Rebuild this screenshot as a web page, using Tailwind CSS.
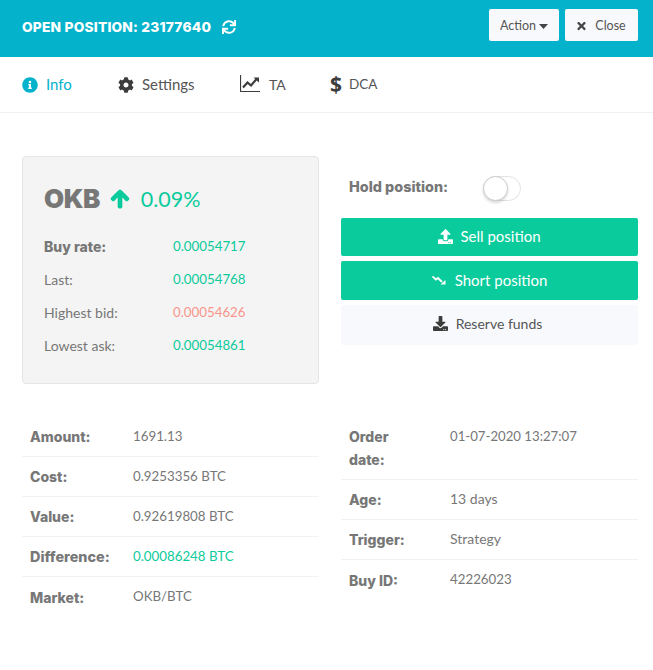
<!DOCTYPE html>
<html lang="en">
<head>
    <meta charset="UTF-8">
    <title>Open position</title>
    <script src="https://cdn.jsdelivr.net/npm/@tailwindcss/browser@4"></script>
</head>
<body class="bg-white font-['Lato',sans-serif] text-[14px] text-[#777777] w-[653px] h-[670px] overflow-hidden">
    <!-- Header -->
    <div class="h-[57px] bg-[#04b2cc] flex items-center justify-between pl-[22px] pr-[15px] pb-[3px]">
        <div class="flex items-center gap-[11px] text-white">
            <span class="font-['Inter',sans-serif] font-extrabold text-[13.75px] tracking-[0.2px] uppercase">Open position: 23177640</span>
            <svg class="w-[14px] h-[14px]" viewBox="0 0 512 512" fill="currentColor"><path d="M440.65 12.57l4 82.77A247.16 247.16 0 0 0 255.83 8C134.73 8 33.91 94.92 12.29 209.82A12 12 0 0 0 24.09 224h49.05a12 12 0 0 0 11.67-9.26 175.91 175.91 0 0 1 317-56.94l-101.46-4.86a12 12 0 0 0-12.57 12v47.41a12 12 0 0 0 12 12H500a12 12 0 0 0 12-12V12a12 12 0 0 0-12-12h-47.37a12 12 0 0 0-11.98 12.57zM255.83 432a175.61 175.61 0 0 1-146-77.8l101.8 4.87a12 12 0 0 0 12.57-12v-47.4a12 12 0 0 0-12-12H12a12 12 0 0 0-12 12V500a12 12 0 0 0 12 12h47.35a12 12 0 0 0 12-12.6l-4.15-82.57A247.17 247.17 0 0 0 255.83 504c121.11 0 221.93-86.92 243.55-201.82a12 12 0 0 0-11.8-14.18h-49.05a12 12 0 0 0-11.67 9.26A175.86 175.86 0 0 1 255.83 432z"/></svg>
        </div>
        <div class="flex gap-[6px] mb-[4px] text-[12.5px] text-[#555555]">
            <button class="w-[70px] h-[32px] pt-[2px] bg-[#f8f9fd] rounded-[2px] flex items-center justify-center gap-[3px]">
                Action
                <svg class="w-[9px] h-[5px]" viewBox="0 0 9 5" fill="#444444"><path d="M0 0h9L4.5 5z"/></svg>
            </button>
            <button class="w-[73px] h-[32px] pt-[2px] bg-[#f8f9fd] rounded-[2px] flex items-center justify-center gap-[9px]">
                <svg class="w-[9px] h-[12px]" viewBox="0 0 352 512" fill="#444444"><path d="M242.72 256l100.07-100.07c12.28-12.28 12.28-32.19 0-44.48l-22.24-22.24c-12.28-12.28-32.19-12.28-44.48 0L176 189.28 75.93 89.21c-12.28-12.28-32.19-12.28-44.48 0L9.21 111.45c-12.28 12.28-12.28 32.19 0 44.48L109.28 256 9.21 356.07c-12.28 12.28-12.28 32.19 0 44.48l22.24 22.24c12.28 12.28 32.2 12.28 44.48 0L176 322.72l100.07 100.07c12.28 12.28 32.2 12.28 44.48 0l22.24-22.24c12.28-12.28 12.28-32.19 0-44.48L242.72 256z"/></svg>
                Close
            </button>
        </div>
    </div>

    <!-- Tabs -->
    <div class="h-[56px] border-b border-[#f0f0f0] flex items-center pl-[22px] text-[15px] text-[#555555]">
        <div class="w-[96px] flex items-center gap-[8px] text-[#04b2cc]">
            <svg class="w-[16px] h-[16px]" viewBox="0 0 512 512" fill="currentColor"><path d="M256 8C119.043 8 8 119.083 8 256c0 136.997 111.043 248 248 248s248-111.003 248-248C504 119.083 392.957 8 256 8zm0 110c23.196 0 42 18.804 42 42s-18.804 42-42 42-42-18.804-42-42 18.804-42 42-42zm56 254c0 6.627-5.373 12-12 12h-88c-6.627 0-12-5.373-12-12v-24c0-6.627 5.373-12 12-12h12v-64h-12c-6.627 0-12-5.373-12-12v-24c0-6.627 5.373-12 12-12h64c6.627 0 12 5.373 12 12v100h12c6.627 0 12 5.373 12 12v24z"/></svg>
            Info
        </div>
        <div class="w-[122px] flex items-center gap-[8px]">
            <svg class="w-[16px] h-[16px]" viewBox="0 0 512 512" fill="#3c3c3c"><path d="M487.4 315.7l-42.6-24.6c4.3-23.2 4.3-47 0-70.2l42.6-24.6c4.9-2.8 7.1-8.6 5.5-14-11.1-35.6-30-67.8-54.7-94.6-3.8-4.1-10-5.1-14.8-2.3L380.8 110c-17.9-15.4-38.5-27.3-60.8-35.1V25.8c0-5.6-3.9-10.5-9.4-11.7-36.7-8.2-74.3-7.8-109.2 0-5.5 1.2-9.4 6.1-9.4 11.7V75c-22.2 7.9-42.8 19.8-60.8 35.1L88.7 85.5c-4.9-2.8-11-1.9-14.8 2.3-24.7 26.7-43.6 58.9-54.7 94.6-1.7 5.4.6 11.2 5.5 14L67.3 221c-4.3 23.2-4.3 47 0 70.2l-42.6 24.6c-4.9 2.8-7.1 8.6-5.5 14 11.1 35.6 30 67.8 54.7 94.6 3.8 4.1 10 5.1 14.8 2.3l42.6-24.6c17.9 15.4 38.5 27.3 60.8 35.1v49.2c0 5.6 3.9 10.5 9.4 11.7 36.7 8.2 74.3 7.8 109.2 0 5.5-1.2 9.4-6.1 9.4-11.7v-49.2c22.2-7.9 42.8-19.8 60.8-35.1l42.6 24.6c4.9 2.8 11 1.9 14.8-2.3 24.7-26.7 43.6-58.9 54.7-94.6 1.5-5.5-.7-11.3-5.6-14.1zM256 336c-44.1 0-80-35.9-80-80s35.9-80 80-80 80 35.9 80 80-35.9 80-80 80z"/></svg>
            Settings
        </div>
        <div class="w-[90px] flex items-center gap-[9px]">
            <svg class="w-[20px] h-[17px] mb-[3px]" viewBox="0 0 20 17" fill="none" stroke="#3c3c3c"><path d="M.5 0v16.5H20" stroke-width="1.2"/><path d="M3 12.5l4.5-5 3.5 3 6-7" stroke-width="2.2"/><path d="M13.5 2.5H19v5z" fill="#3c3c3c" stroke="none"/></svg>
            <span class="text-[14px]">TA</span>
        </div>
        <div class="flex items-center gap-[9px]">
            <span class="w-[10px] font-['Noto_Sans',sans-serif] font-bold text-[21px] text-[#3c3c3c] leading-none">$</span>
            <span class="text-[13.5px]">DCA</span>
        </div>
    </div>

    <div class="px-[22px] pt-[43px]">
        <div class="grid grid-cols-[297px_297px] gap-x-[22px]">
            <!-- Rates card -->
            <div class="h-[228px] bg-[#f4f4f4] border border-[#e3e6e6] rounded-[4px] pl-[21px] pt-[26px]">
                <div class="flex items-center h-[30px]">
                    <span class="font-['Inter',sans-serif] font-black text-[26px] tracking-[-0.5px] text-[#777777]">OKB</span>
                    <svg class="w-[20px] h-[20px] ml-[10px] mt-[2px]" viewBox="0 0 448 512" fill="#0acb9b" stroke="#0acb9b" stroke-width="40"><path d="M34.9 289.5l-22.2-22.2c-9.4-9.4-9.4-24.6 0-33.9L207 39c9.4-9.4 24.6-9.4 33.9 0l194.3 194.3c9.4 9.4 9.4 24.6 0 33.9L413 289.4c-9.5 9.5-25 9.3-34.3-.4L264 168.6V456c0 13.3-10.7 24-24 24h-32c-13.3 0-24-10.7-24-24V168.6L69.2 289.1c-9.3 9.8-24.8 10-34.3.4z"/></svg>
                    <span class="ml-[11px] mt-[2px] text-[21.5px] text-[#0acb9b]">0.09%</span>
                </div>
                <div class="mt-[17px] grid grid-cols-[129px_1fr] auto-rows-[33px] items-center">
                    <span class="font-['Inter',sans-serif] font-extrabold text-[14px]">Buy rate:</span><span class="text-[13.3px] text-[#0acb9b]">0.00054717</span>
                    <span>Last:</span><span class="pt-[1px] text-[13.3px] text-[#0acb9b]">0.00054768</span>
                    <span>Highest bid:</span><span class="pt-[1px] text-[13.3px] text-[#f8958a]">0.00054626</span>
                    <span>Lowest ask:</span><span class="pt-[1px] text-[13.3px] text-[#0acb9b]">0.00054861</span>
                </div>
            </div>

            <!-- Actions -->
            <div>
                <div class="h-[62px] flex items-start pl-[8px] pt-[20px]">
                    <span class="w-[134px] font-['Inter',sans-serif] font-extrabold text-[14.4px] leading-[22px]">Hold position:</span>
                    <span class="relative w-[38px] h-[25px] rounded-full border border-[#e3e3e3] bg-white">
                        <span class="absolute left-[-1px] top-[-1px] w-[25px] h-[25px] rounded-full bg-white border border-[#cccccc] shadow-[0_2px_3px_rgba(0,0,0,0.15)]"></span>
                    </span>
                </div>
                <div class="flex flex-col gap-[5px] text-[15px]">
                    <button class="h-[38px] pb-[1px] bg-[#0acb9b] rounded-[2px] text-white flex items-center justify-center gap-[7px]">
                        <svg class="w-[15px] h-[15px]" viewBox="0 0 512 512" fill="currentColor"><path d="M296 384h-80c-13.3 0-24-10.7-24-24V192h-87.7c-17.8 0-26.7-21.5-14.1-34.1L242.3 5.7c7.5-7.5 19.8-7.5 27.3 0l152.2 152.2c12.6 12.6 3.7 34.1-14.1 34.1H320v168c0 13.3-10.7 24-24 24zm216-8v112c0 13.3-10.7 24-24 24H24c-13.3 0-24-10.7-24-24V376c0-13.3 10.7-24 24-24h136v8c0 30.9 25.1 56 56 56h80c30.9 0 56-25.1 56-56v-8h136c13.3 0 24 10.7 24 24zm-124 88c0-11-9-20-20-20s-20 9-20 20 9 20 20 20 20-9 20-20zm64 0c0-11-9-20-20-20s-20 9-20 20 9 20 20 20 20-9 20-20z"/></svg>
                        Sell position
                    </button>
                    <button class="h-[39px] pb-[1px] bg-[#0acb9b] rounded-[2px] text-white flex items-center justify-center gap-[9px]">
                        <svg class="w-[14px] h-[10px]" viewBox="0 0 14 10" fill="none" stroke="currentColor"><path d="M.5 1.5l3.5 3 2-1.5 4 4" stroke-width="1.8"/><path d="M13.5 9.5H8.5l5-4.5z" fill="currentColor" stroke="none"/></svg>
                        Short position
                    </button>
                    <button class="h-[40px] pb-[3px] pr-[4px] bg-[#f8f9fd] rounded-[2px] text-[14px] text-[#555555] flex items-center justify-center gap-[8px]">
                        <svg class="w-[15px] h-[15px]" viewBox="0 0 512 512" fill="#3c3c3c"><path d="M216 0h80c13.3 0 24 10.7 24 24v168h87.7c17.8 0 26.7 21.5 14.1 34.1L269.7 378.3c-7.5 7.5-19.8 7.5-27.3 0L90.1 226.1c-12.6-12.6-3.7-34.1 14.1-34.1H192V24c0-13.3 10.7-24 24-24zm296 376v112c0 13.3-10.7 24-24 24H24c-13.3 0-24-10.7-24-24V376c0-13.3 10.7-24 24-24h146.7l49 49c20.1 20.1 52.5 20.1 72.6 0l49-49H488c13.3 0 24 10.7 24 24zm-124 88c0-11-9-20-20-20s-20 9-20 20 9 20 20 20 20-9 20-20zm64 0c0-11-9-20-20-20s-20 9-20 20 9 20 20 20 20-9 20-20z"/></svg>
                        Reserve funds
                    </button>
                </div>
            </div>
        </div>

        <!-- Position details -->
        <div class="grid grid-cols-[297px_297px] gap-x-[22px] mt-[33px] items-start">
            <div class="divide-y divide-[#f2f2f2]">
                <div class="h-[40px] flex items-center pl-[8px]"><span class="w-[103px] font-['Inter',sans-serif] font-extrabold">Amount:</span><span class="text-[13.3px]">1691.13</span></div>
                <div class="h-[40px] flex items-center pl-[8px]"><span class="w-[103px] font-['Inter',sans-serif] font-extrabold">Cost:</span><span class="text-[13.3px]">0.9253356 BTC</span></div>
                <div class="h-[40px] flex items-center pl-[8px]"><span class="w-[103px] font-['Inter',sans-serif] font-extrabold">Value:</span><span class="text-[13.3px]">0.92619808 BTC</span></div>
                <div class="h-[40px] flex items-center pl-[8px]"><span class="w-[103px] font-['Inter',sans-serif] font-extrabold text-[14.4px]">Difference:</span><span class="text-[13.3px] text-[#0acb9b]">0.00086248 BTC</span></div>
                <div class="h-[40px] flex items-center pl-[8px]"><span class="w-[103px] font-['Inter',sans-serif] font-extrabold">Market:</span><span class="text-[13.3px]">OKB/BTC</span></div>
            </div>
            <div class="divide-y divide-[#f2f2f2]">
                <div class="h-[63px] flex items-start pl-[8px] pt-[8px]"><span class="w-[101px] font-['Inter',sans-serif] font-extrabold leading-[23px]">Order<br>date:</span><span class="text-[13.2px] leading-[22px]">01-07-2020 13:27:07</span></div>
                <div class="h-[40px] flex items-center pl-[8px]"><span class="w-[101px] font-['Inter',sans-serif] font-extrabold">Age:</span><span class="pb-[2px]">13 days</span></div>
                <div class="h-[40px] flex items-center pl-[8px]"><span class="w-[101px] font-['Inter',sans-serif] font-extrabold">Trigger:</span><span class="pb-[2px]">Strategy</span></div>
                <div class="h-[40px] flex items-center pl-[8px]"><span class="w-[101px] font-['Inter',sans-serif] font-extrabold">Buy ID:</span><span class="text-[13.3px]">42226023</span></div>
            </div>
        </div>
    </div>
</body>
</html>
